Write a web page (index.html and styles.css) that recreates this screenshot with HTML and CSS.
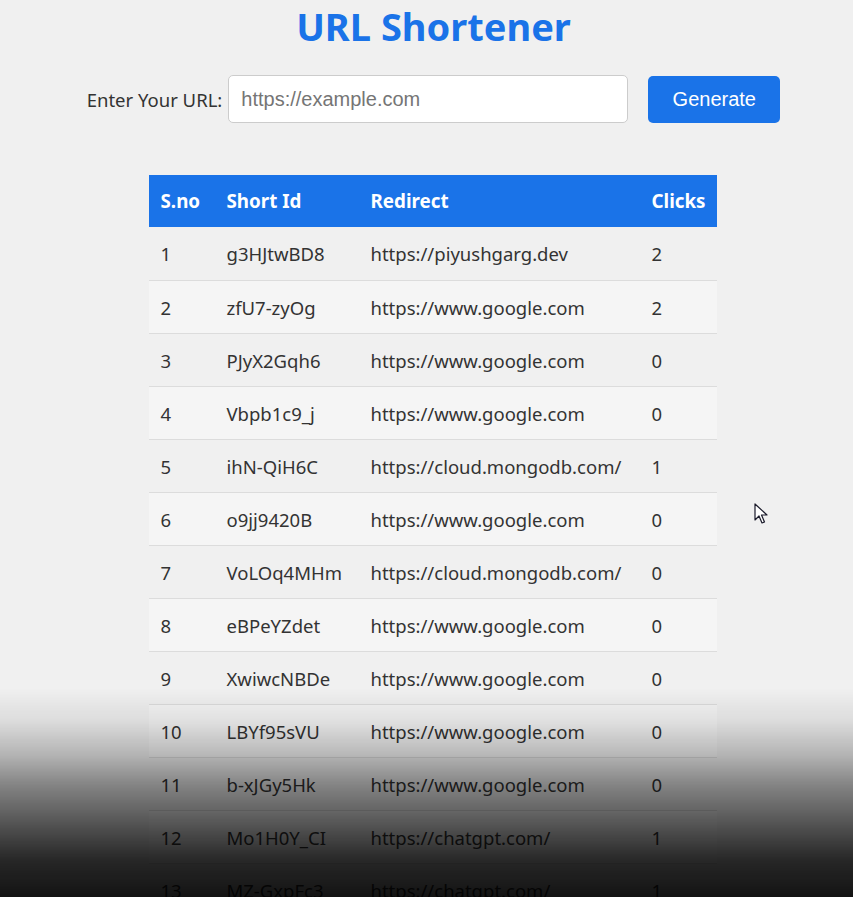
FILE: index.html
```html
<!DOCTYPE html>
<html lang="en">
<head>
<meta charset="utf-8">
<title>URL Shortener</title>
<link rel="stylesheet" href="styles.css">
</head>
<body>
<main class="page">
  <h1 class="title">URL Shortener</h1>
  <form class="url-form">
    <label class="url-label" for="url">Enter Your URL:</label>
    <input class="url-input" id="url" type="text" placeholder="https://example.com">
    <button class="gen-btn" type="button">Generate</button>
  </form>
  <table class="url-table">
    <colgroup>
      <col class="c-no"><col class="c-id"><col class="c-url"><col class="c-clicks">
    </colgroup>
    <thead>
      <tr><th>S.no</th><th>Short Id</th><th>Redirect</th><th>Clicks</th></tr>
    </thead>
    <tbody>
      <tr><td>1</td><td>g3HJtwBD8</td><td>https://piyushgarg.dev</td><td>2</td></tr>
      <tr><td>2</td><td>zfU7-zyOg</td><td>https://www.google.com</td><td>2</td></tr>
      <tr><td>3</td><td>PJyX2Gqh6</td><td>https://www.google.com</td><td>0</td></tr>
      <tr><td>4</td><td>Vbpb1c9_j</td><td>https://www.google.com</td><td>0</td></tr>
      <tr><td>5</td><td>ihN-QiH6C</td><td>https://cloud.mongodb.com/</td><td>1</td></tr>
      <tr><td>6</td><td>o9jj9420B</td><td>https://www.google.com</td><td>0</td></tr>
      <tr><td>7</td><td>VoLOq4MHm</td><td>https://cloud.mongodb.com/</td><td>0</td></tr>
      <tr><td>8</td><td>eBPeYZdet</td><td>https://www.google.com</td><td>0</td></tr>
      <tr><td>9</td><td>XwiwcNBDe</td><td>https://www.google.com</td><td>0</td></tr>
      <tr><td>10</td><td>LBYf95sVU</td><td>https://www.google.com</td><td>0</td></tr>
      <tr><td>11</td><td>b-xJGy5Hk</td><td>https://www.google.com</td><td>0</td></tr>
      <tr><td>12</td><td>Mo1H0Y_CI</td><td>https://chatgpt.com/</td><td>1</td></tr>
      <tr><td>13</td><td>MZ-GxpFc3</td><td>https://chatgpt.com/</td><td>1</td></tr>
    </tbody>
  </table>
</main>
<div class="shade"></div>
<svg class="cursor" width="14" height="22" viewBox="0 0 14 22" aria-hidden="true">
  <path d="M1 1 L1 17 L5 13 L8 20 L10.5 19 L7.5 12 L13 12 Z" fill="#fff" stroke="#1a1a2a" stroke-width="1.2" stroke-linejoin="round"/>
</svg>
</body>
</html>
```
FILE: styles.css
```css
html, body {
  margin: 0;
  padding: 0;
  height: 100%;
  overflow: hidden;
}
body {
  background: #f0f0f0;
  font-family: "Noto Sans", "Open Sans", sans-serif;
  color: #333;
}
.page {
  display: flex;
  flex-direction: column;
  align-items: center;
  padding-left: 14px;
}
.title {
  margin: 3px 0 0;
  font-size: 38px;
  line-height: 46px;
  font-weight: 700;
  color: #1a73e8;
}
.url-form {
  display: flex;
  align-items: center;
  margin-top: 26px;
}
.url-label {
  font-size: 18.5px;
  color: #333;
  margin-right: 6px;
}
.url-input {
  box-sizing: border-box;
  width: 400px;
  height: 48px;
  border: 1px solid #ccc;
  border-radius: 5px;
  background: #fff;
  padding: 0 12px;
  font-family: "Liberation Sans", Arial, sans-serif;
  font-size: 20px;
  color: #333;
  outline: none;
}
.url-input::placeholder {
  color: #757575;
}
.gen-btn {
  box-sizing: border-box;
  margin-left: 20px;
  width: 132px;
  height: 47px;
  border: none;
  border-radius: 5px;
  background: #1a73e8;
  color: #fff;
  font-family: "Liberation Sans", Arial, sans-serif;
  font-size: 20px;
}
.url-table {
  margin: 52px 0 0 -2px;
  width: 568px;
  table-layout: fixed;
  border-collapse: collapse;
  font-size: 18.5px;
}
.c-no { width: 66px; }
.c-id { width: 144px; }
.c-url { width: 281px; }
.c-clicks { width: 77px; }
.url-table th {
  background: #1a73e8;
  color: #fff;
  font-weight: 700;
  font-size: 18.8px;
  text-align: left;
  height: 52px;
  padding: 0 12px;
  box-sizing: border-box;
  white-space: nowrap;
}
.url-table td {
  height: 53px;
  padding: 1px 12px 0;
  box-sizing: border-box;
  border-bottom: 1px solid #dcdcdc;
  color: #333;
  white-space: nowrap;
}
.url-table tbody tr:nth-child(even) {
  background: #f5f5f5;
}
.shade {
  position: fixed;
  left: 0;
  right: 0;
  top: 0;
  height: 897px;
  pointer-events: none;
  background: linear-gradient(to bottom,
    rgba(0,0,0,0) 0px,
    rgba(0,0,0,0) 688px,
    rgba(0,0,0,0.08) 720px,
    rgba(0,0,0,0.25) 755px,
    rgba(0,0,0,0.45) 785px,
    rgba(0,0,0,0.66) 825px,
    rgba(0,0,0,0.84) 860px,
    rgba(0,0,0,0.92) 897px);
}
.cursor {
  position: fixed;
  left: 754px;
  top: 503px;
}
```
